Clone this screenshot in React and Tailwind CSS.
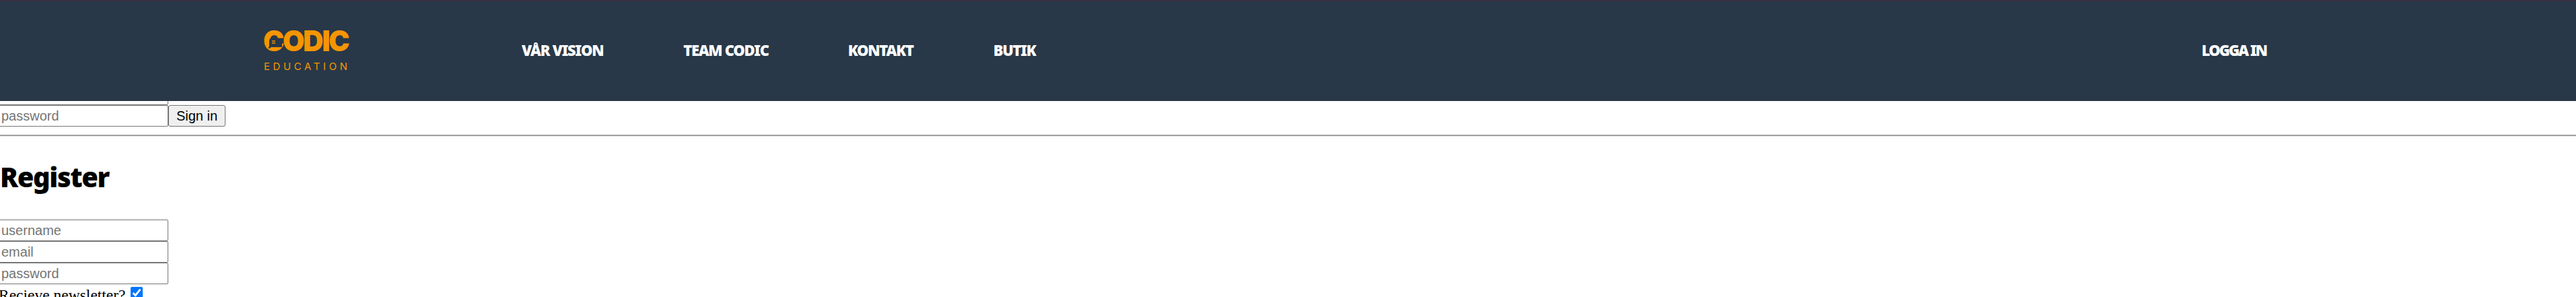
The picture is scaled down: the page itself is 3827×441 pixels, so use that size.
const navItems = [
  { label: "VÅR VISION", className: "ml-[256px]" },
  { label: "TEAM CODIC", className: "ml-[119px]" },
  { label: "KONTAKT", className: "ml-[118px]" },
  { label: "BUTIK", className: "ml-[119px]" },
];

function Logo() {
  return (
    <div className="relative mb-[3px] flex w-[128px] flex-col text-[#f59500]">
      <span className="font-['Inter',sans-serif] text-[42px] leading-[32px] font-black tracking-[-2.3px]">CODIC</span>
      <span className="mt-[16px] ml-[1px] font-['Inter',sans-serif] text-[15px] leading-[12px] tracking-[4.6px] whitespace-nowrap">EDUCATION</span>
      {/* speech bubble cut out of the C */}
      <svg className="absolute top-[11px] left-[6px]" width="22" height="18" viewBox="0 0 22 18">
        <path d="M6 1H22V14H6C5 15 3 16 1 16C2.500 14.500 3 13 3 11V4C3 2 4.500 1 6 1Z" fill="#283848" />
        <path d="M7 5H12M7 8H12" stroke="#f59500" strokeWidth="1.500" />
      </svg>
    </div>
  );
}

function TextInput({ placeholder, type = "text" }) {
  return (
    <input
      type={type}
      placeholder={placeholder}
      className="-ml-[2px] block h-[32px] w-[252px] rounded-[2px] border border-[#767676] bg-white px-[3px] font-['Liberation_Sans',sans-serif] text-[20px] text-black placeholder:text-[#757575]"
    />
  );
}

export default function App() {
  return (
    <div className="h-[441px] overflow-hidden bg-white">
      <header className="relative z-10 flex h-[150px] items-center justify-between border-t-[2px] border-[#3a3040] bg-[#283848] pr-[460px] pl-[391px]">
        <div className="flex items-center">
          <Logo />
          <nav className="mb-[4px] flex font-['Noto_Sans',sans-serif] text-[22px] font-black tracking-[-1.3px] whitespace-nowrap text-white">
            {navItems.map((item) => (
              <a key={item.label} className={item.className}>{item.label}</a>
            ))}
          </nav>
        </div>
        <a className="mb-[4px] font-['Noto_Sans',sans-serif] text-[22px] font-black tracking-[-2px] whitespace-nowrap text-white">LOGGA IN</a>
      </header>

      <form className="-mt-[26px]">
        <TextInput placeholder="email" />
        <div className="flex">
          <TextInput placeholder="password" type="password" />
          <button type="button" className="h-[32px] w-[85px] rounded-[3px] border border-[#767676] bg-[#efefef] font-['Liberation_Sans',sans-serif] text-[20px] text-black">Sign in</button>
        </div>
      </form>

      <hr className="mt-[12px] h-[3px] border-t-2 border-b border-t-[#a0a0a0] border-b-[#eeeeee]" />

      <h1 className="mt-[32px] font-['Noto_Sans',sans-serif] text-[40px] leading-[56px] font-black tracking-[-1.4px] text-black">Register</h1>

      <form className="mt-[35px]">
        <TextInput placeholder="username" />
        <TextInput placeholder="email" />
        <TextInput placeholder="password" type="password" />
        <label className="-ml-[2px] flex items-start pt-[2px] font-['Liberation_Serif',serif] text-[23.500px] leading-[28px] whitespace-nowrap text-black">
          Recieve newsletter?
          <input type="checkbox" defaultChecked className="mt-[2px] ml-[7px] h-[18px] w-[18px]" />
        </label>
      </form>
    </div>
  );
}
